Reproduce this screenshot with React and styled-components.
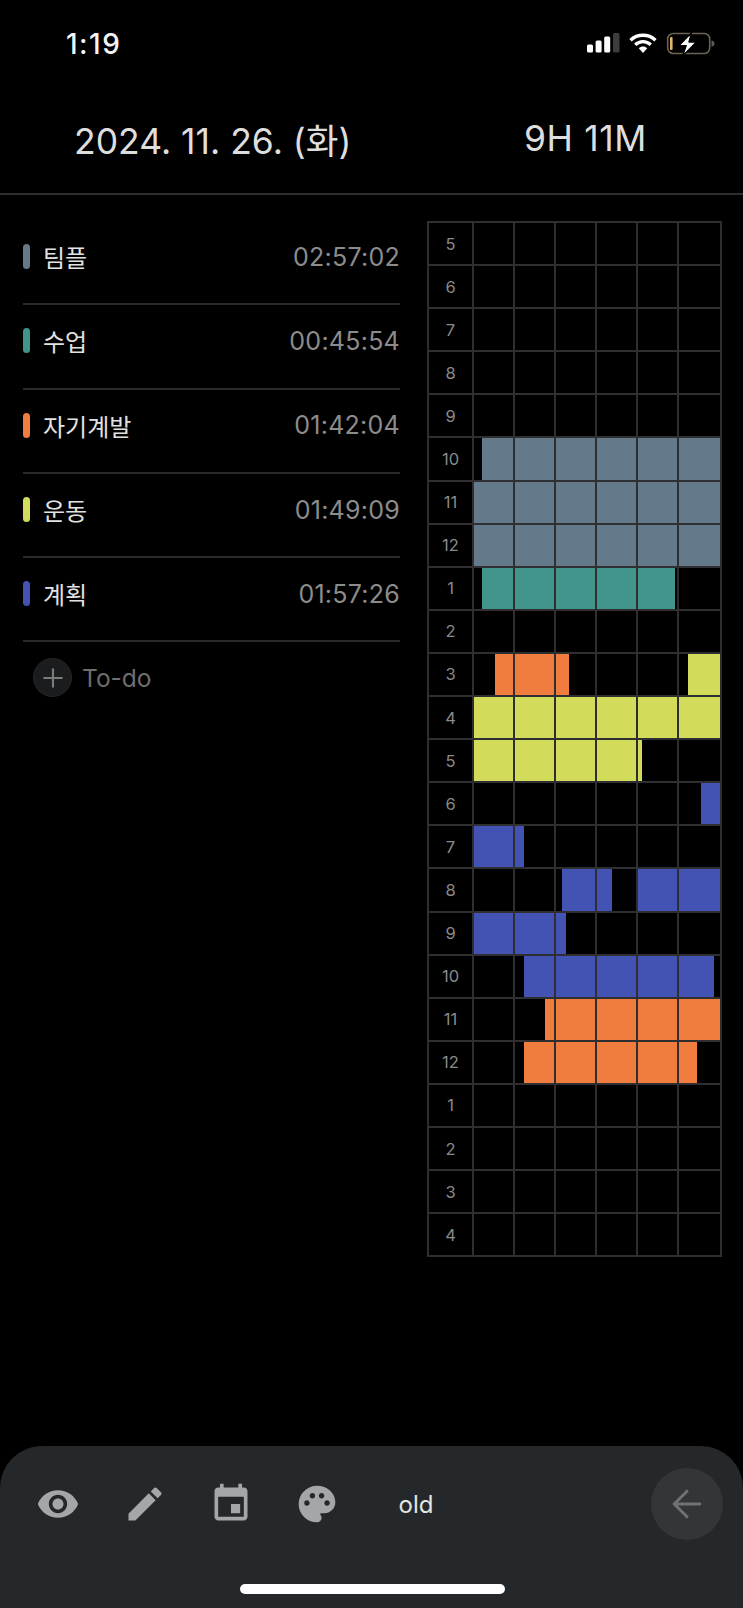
import React from 'react';
import styled, { createGlobalStyle } from 'styled-components';
import { ArrowLeft, Plus } from 'lucide-react';

const Global = createGlobalStyle`
  html, body { margin: 0; padding: 0; background: #000; }
  * { box-sizing: border-box; }
`;

const FONT = `Inter, "Noto Sans CJK KR", "Liberation Sans", sans-serif`;
const C = { slate: '#64798a', teal: '#41958a', orange: '#f07d3d', yellow: '#d3db5a', blue: '#4353b3' };
const LINE = '#2f2f31';

const Page = styled.div`
  width: 743px; height: 1608px; background: #000; color: #fff;
  display: flex; flex-direction: column; font-family: ${FONT}; overflow: hidden;
`;
const StatusBar = styled.div`
  height: 88px; flex: none; display: flex; align-items: center; justify-content: space-between;
  padding: 0 28px 0 66px;
`;
const Clock = styled.span` font-size: 28px; font-weight: 500; letter-spacing: 1.5px; color: #f4f4f4; `;
const StatusIcons = styled.div` display: flex; align-items: center; `;
const Header = styled.header`
  height: 107px; flex: none; display: flex; align-items: center; padding: 0 0 4px 74px;
  border-bottom: 2px solid #2e2e30;
  font-size: 35.5px; font-weight: 400; color: #dedede;
`;
const DateText = styled.div` width: 450px; `;
const Total = styled.div` letter-spacing: 0.6px; `;
const Main = styled.main` flex: 1; display: flex; padding: 26px 21px 0 23px; align-items: flex-start; `;
const List = styled.div` width: 377px; flex: none; `;
const Row = styled.div`
  height: 84.3px; display: flex; align-items: center; padding-bottom: 11px;
  border-bottom: 2px solid #2a2a2c;
`;
const Pill = styled.span`
  width: 7px; height: 25px; border-radius: 4px; flex: none; background: ${p => p.$color};
`;
const Name = styled.span` margin-left: 13px; font-size: 24px; color: #e2e2e2; `;
const Time = styled.span` margin-left: auto; font-size: 25px; letter-spacing: 0.25px; color: #8c8c8c; `;
const Todo = styled.div` display: flex; align-items: center; margin: 16px 0 0 10px; `;
const PlusCircle = styled.span`
  width: 39px; height: 39px; border-radius: 50%; background: #1b1c1d; border: 1px solid #262728;
  display: flex; align-items: center; justify-content: center; color: #7c7c7c;
`;
const TodoLabel = styled.span` margin-left: 10px; font-size: 24.5px; color: #6e6e6e; `;
const Grid = styled.div`
  margin-left: 27px; width: 295px; flex: none; border: 2px solid ${LINE}; border-bottom-width: 0;
`;
const Hour = styled.div`
  height: 43.1px; display: flex; border-bottom: 2px solid ${LINE};
`;
const HourLabel = styled.div`
  width: 43px; flex: none; display: flex; align-items: center; justify-content: center;
  font-size: 16.5px; color: #8a8a8a;
`;
const Track = styled.div` flex: 1; position: relative; `;
const Bar = styled.div`
  position: absolute; top: 0; bottom: 0; background: ${p => p.$color};
`;
const Cells = styled.div`
  position: relative; height: 100%; display: grid;
  grid-template-columns: repeat(5, 41.1px) 1fr;
`;
const Cell = styled.div` border-left: 2px solid ${LINE}; `;
const BottomBar = styled.footer`
  height: 162px; flex: none; background: #25282a; border-radius: 42px 42px 0 0;
  display: flex; flex-direction: column; padding: 22px 20px 0 15px;
`;
const ToolRow = styled.div` height: 72px; display: flex; align-items: center; `;
const Tool = styled.button`
  width: 86.4px; height: 72px; flex: none; padding: 0; border: 0; background: none; color: #a5a6a7;
  display: flex; align-items: center; justify-content: center;
`;
const Old = styled.span` margin-left: 38px; font-size: 24px; color: #e4e4e4; `;
const Back = styled.button`
  margin-left: auto; width: 72px; height: 72px; border-radius: 50%; border: 0; padding: 0;
  background: #333638; color: #707274; display: flex; align-items: center; justify-content: center;
`;
const HomeBar = styled.div`
  width: 265px; height: 10px; border-radius: 5px; background: #fff; align-self: center;
  margin: 44px 0 0 6px; flex: none;
`;

const rows = [
  ['5'], ['6'], ['7'], ['8'], ['9'],
  ['10', [[C.slate, 10.3, 248]]],
  ['11', [[C.slate, 0, 248]]],
  ['12', [[C.slate, 0, 248]]],
  ['1', [[C.teal, 10.3, 203.5]]],
  ['2'],
  ['3', [[C.orange, 22.7, 96.7], [C.yellow, 216, 248]]],
  ['4', [[C.yellow, 0, 248]]],
  ['5', [[C.yellow, 0, 170]]],
  ['6', [[C.blue, 228.7, 248]]],
  ['7', [[C.blue, 0, 52.3]]],
  ['8', [[C.blue, 90.3, 139.7], [C.blue, 166.3, 248]]],
  ['9', [[C.blue, 0, 94.3]]],
  ['10', [[C.blue, 52.3, 241.7]]],
  ['11', [[C.orange, 73.3, 248]]],
  ['12', [[C.orange, 52.3, 225.3]]],
  ['1'], ['2'], ['3'], ['4'],
];

const tasks = [
  ['팀플', '02:57:02', C.slate],
  ['수업', '00:45:54', C.teal],
  ['자기계발', '01:42:04', C.orange],
  ['운동', '01:49:09', C.yellow],
  ['계획', '01:57:26', C.blue],
];

const Icon = ({ d }) => (
  <svg width="44" height="44" viewBox="0 0 24 24" fill="currentColor"><path d={d} /></svg>
);

const EYE = 'M12 4.5C7 4.5 2.73 7.61 1 12c1.73 4.39 6 7.5 11 7.5s9.27-3.11 11-7.5c-1.73-4.39-6-7.5-11-7.5zM12 17c-2.76 0-5-2.24-5-5s2.24-5 5-5 5 2.24 5 5-2.24 5-5 5zm0-8c-1.66 0-3 1.34-3 3s1.34 3 3 3 3-1.34 3-3-1.34-3-3-3z';
const EDIT = 'M3 17.25V21h3.75L17.81 9.94l-3.75-3.75L3 17.25zM20.71 7.04c.39-.39.39-1.02 0-1.41l-2.34-2.34c-.39-.39-1.02-.39-1.41 0l-1.83 1.83 3.75 3.75 1.83-1.83z';
const EVENT = 'M17 12h-5v5h5v-5zM16 1v2H8V1H6v2H5c-1.11 0-1.99.9-1.99 2L3 19c0 1.1.89 2 2 2h14c1.1 0 2-.9 2-2V5c0-1.1-.9-2-2-2h-1V1h-2zm3 18H5V8h14v11z';
const PALETTE = 'M12 2C6.49 2 2 6.49 2 12s4.49 10 10 10c1.38 0 2.5-1.12 2.5-2.5 0-.61-.23-1.2-.64-1.67-.08-.1-.13-.21-.13-.33 0-.28.22-.5.5-.5H16c3.31 0 6-2.69 6-6 0-4.96-4.49-9-10-9zm-5.5 11c-.83 0-1.5-.67-1.5-1.5S5.67 10 6.5 10s1.5.67 1.5 1.5S7.33 13 6.5 13zm3-4C8.67 9 8 8.33 8 7.5S8.67 6 9.5 6s1.5.67 1.5 1.5S10.33 9 9.5 9zm5 0c-.83 0-1.5-.67-1.5-1.5S13.67 6 14.5 6s1.5.67 1.5 1.5S15.33 9 14.5 9zm3 4c-.83 0-1.5-.67-1.5-1.5s.67-1.5 1.5-1.5 1.5.67 1.5 1.5-.67 1.5-1.5 1.5z';

const StatusGlyphs = () => (
  <svg width="128" height="24" viewBox="0 0 128 24">
    <rect x="0" y="12.5" width="6" height="8" rx="1.5" fill="#fff" />
    <rect x="8.6" y="8.5" width="6" height="12" rx="1.5" fill="#fff" />
    <rect x="17.2" y="4.5" width="6" height="16" rx="1.5" fill="#fff" />
    <rect x="26" y="1" width="6.5" height="19.5" rx="1.5" fill="#3d3d3d" />
    <g fill="none" stroke="#fff" strokeWidth="3.4">
      <path d="M43.5 8.2 C50.5 1.6 61.5 1.6 68.5 8.2" />
      <path d="M48.2 12.8 C52.8 8.6 59.2 8.6 63.8 12.8" />
    </g>
    <path d="M51.8 16.2 C54.2 14 57.8 14 60.2 16.2 L56 21 Z" fill="#fff" />
    <rect x="80.7" y="1.5" width="42" height="20" rx="5.5" fill="none" stroke="#6b6455" strokeWidth="1.6" />
    <rect x="83" y="5" width="2.6" height="13" rx="1" fill="#e2b766" />
    <path d="M124.5 8.2 C126.6 9 127.5 10 127.5 11.5 C127.5 13 126.6 14 124.5 14.8 Z" fill="#5c5c5c" />
    <path d="M104.5 0.8 L92 13.6 H99.2 L95.6 24 L109.5 10 H102 Z" fill="#fff" stroke="#000" strokeWidth="1.4" strokeLinejoin="round" />
  </svg>
);

export default function App() {
  const TRACK = 248;
  return (
    <Page>
      <Global />
      <StatusBar>
        <Clock>1:19</Clock>
        <StatusIcons><StatusGlyphs /></StatusIcons>
      </StatusBar>
      <Header>
        <DateText>2024. 11. 26. (화)</DateText>
        <Total>9H 11M</Total>
      </Header>
      <Main>
        <List>
          {tasks.map(([name, time, color]) => (
            <Row key={name}>
              <Pill $color={color} />
              <Name>{name}</Name>
              <Time>{time}</Time>
            </Row>
          ))}
          <Todo>
            <PlusCircle><Plus size={30} strokeWidth={1.7} /></PlusCircle>
            <TodoLabel>To-do</TodoLabel>
          </Todo>
        </List>
        <Grid>
          {rows.map(([label, bars = []], i) => (
            <Hour key={i}>
              <HourLabel>{label}</HourLabel>
              <Track>
                {bars.map(([color, from, to], j) => (
                  <Bar key={j} $color={color} style={{ left: `${(from / TRACK) * 100}%`, width: `${((to - from) / TRACK) * 100}%` }} />
                ))}
                <Cells>
                  {[0, 1, 2, 3, 4, 5].map(c => <Cell key={c} />)}
                </Cells>
              </Track>
            </Hour>
          ))}
        </Grid>
      </Main>
      <BottomBar>
        <ToolRow>
          <Tool><Icon d={EYE} /></Tool>
          <Tool><Icon d={EDIT} /></Tool>
          <Tool><Icon d={EVENT} /></Tool>
          <Tool><Icon d={PALETTE} /></Tool>
          <Old>old</Old>
          <Back><ArrowLeft size={44} strokeWidth={1.6} /></Back>
        </ToolRow>
        <HomeBar />
      </BottomBar>
    </Page>
  );
}
